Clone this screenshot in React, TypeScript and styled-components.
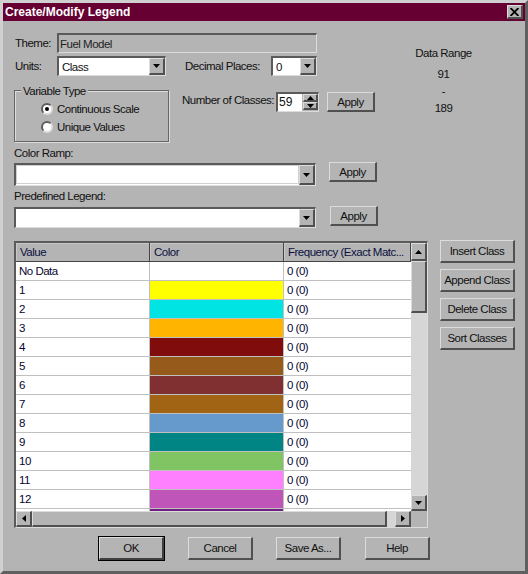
import React from 'react';
import styled, { createGlobalStyle } from 'styled-components';

const Global = createGlobalStyle`
  html, body { margin: 0; padding: 0; background: #b4b4b4; }
  * { box-sizing: border-box; }
`;

const raised = `
  background: #b4b4b4;
  border-style: solid;
  border-width: 1px 2px 2px 1px;
  border-color: #dcdcdc #505050 #505050 #dcdcdc;
`;
const sunken = `
  border-style: solid;
  border-width: 2px 1px 1px 2px;
  border-color: #5a5a5a #dcdcdc #dcdcdc #5a5a5a;
`;

const Dialog = styled.div`
  width: 528px; height: 574px; overflow: hidden;
  display: flex; flex-direction: column;
  background: #b4b4b4;
  border-style: solid; border-width: 3px;
  border-color: #d0d0d0 #606060 #606060 #d0d0d0;
  font: 11.5px/14px "Liberation Sans", Arial, sans-serif;
  letter-spacing: -0.5px;
  color: #111;
`;
const TitleBar = styled.div`
  height: 18px; background: #660033; color: #fff;
  display: flex; align-items: center; justify-content: space-between;
  padding: 0 2px 0 2px;
  font: bold 12px/18px "Liberation Sans", Arial, sans-serif;
  letter-spacing: 0;
`;
const CloseButton = styled.div`
  ${raised}
  width: 16px; height: 14px;
  display: flex; align-items: center; justify-content: center;
`;
const Body = styled.div`
  flex: 1; display: flex; flex-direction: column;
  padding: 12px 0 0 11px;
`;
const Top = styled.div`display: flex;`;
const TopLeft = styled.div`width: 392px; display: flex; flex-direction: column;`;
const Row = styled.div<{ $top?: number }>`
  display: flex; align-items: center;
  margin-top: ${p => p.$top ?? 0}px;
  height: 20px;
`;
const Label = styled.span<{ $w?: number; $left?: number }>`
  display: block; white-space: nowrap; flex: none;
  width: ${p => (p.$w ? p.$w + 'px' : 'auto')};
  margin-left: ${p => p.$left ?? 0}px;
`;
const ThemeField = styled.div`
  ${sunken}
  width: 260px; height: 20px; padding-left: 1px;
  line-height: 18px; color: #222;
`;
const ComboBox = styled.div<{ $w: number }>`
  ${sunken}
  width: ${p => p.$w}px; height: 20px; flex: none;
  background: #fff; display: flex; justify-content: space-between;
  padding-left: 3px; line-height: 18px;
`;
const ComboArrow = styled.div`
  ${raised}
  width: 16px; flex: none;
  display: flex; align-items: center; justify-content: center;
`;
const ArrowDown = () => (
  <svg width="7" height="4" viewBox="0 0 7 4"><path d="M0 0h7L3.5 4z" fill="#000" /></svg>
);
const ArrowUp = () => (
  <svg width="7" height="4" viewBox="0 0 7 4"><path d="M0 4h7L3.5 0z" fill="#000" /></svg>
);
const ArrowLeft = () => (
  <svg width="4" height="7" viewBox="0 0 4 7"><path d="M4 0v7L0 3.5z" fill="#000" /></svg>
);
const ArrowRight = () => (
  <svg width="4" height="7" viewBox="0 0 4 7"><path d="M0 0v7l4-3.5z" fill="#000" /></svg>
);
const MidRow = styled.div`display: flex; margin-top: 14px; height: 52px;`;
const Group = styled.div`
  width: 155px; height: 52px; padding: 9px 0 0 26px;
  border: 1px solid #666;
  box-shadow: inset 1px 1px 0 #dcdcdc, 1px 1px 0 #dcdcdc;
  position: relative;
`;
const GroupTitle = styled.span`
  position: absolute; left: 6px; top: -7px; padding: 0 2px; background: #b4b4b4;
`;
const RadioRow = styled.div`
  display: flex; align-items: center; height: 18px; gap: 4px;
`;
const RadioDot = styled.span<{ $on?: boolean }>`
  width: 12px; height: 12px; border-radius: 50%; background: #fff; flex: none;
  border: 2px solid #5e5e5e; border-right-color: #ddd; border-bottom-color: #ddd;
  display: flex; align-items: center; justify-content: center;
  &::after { content: ""; width: 4px; height: 4px; border-radius: 50%; background: ${p => (p.$on ? '#000' : 'transparent')}; }
`;
const ClassRow = styled.div`display: flex; align-items: flex-start; margin-left: 13px; margin-top: 2px;`;
const ClassLabel = styled.span`margin-top: 1px; line-height: 14px; white-space: nowrap; width: 94px;`;
const Spin = styled.div`
  ${sunken}
  width: 43px; height: 20px; background: #fff; display: flex; justify-content: space-between;
  padding-left: 1px; line-height: 17px; font-size: 12px; letter-spacing: 0;
`;
const SpinButtons = styled.div`
  display: flex; flex-direction: column; width: 16px; background: #b4b4b4;
  padding: 0 0 1px 1px;
`;
const SpinBtn = styled.div`
  ${raised}
  flex: 1; display: flex; align-items: center; justify-content: center;
`;
const Button = styled.div<{ $w: number; $h?: number; $left?: number; $default?: boolean }>`
  ${raised}
  width: ${p => p.$w}px; height: ${p => p.$h ?? 20}px; flex: none;
  margin-left: ${p => p.$left ?? 0}px;
  display: flex; align-items: center; justify-content: center; white-space: nowrap;
  ${p => p.$default ? 'outline: 1px solid #000; outline-offset: 0; border-color: #dcdcdc #404040 #404040 #dcdcdc;' : ''}
`;
const RampLabel = styled.div<{ $top: number }>`height: 14px; margin-top: ${p => p.$top}px;`;
const RampRow = styled.div<{ $top: number; $h: number }>`
  display: flex; align-items: flex-start; margin-top: ${p => p.$top}px; height: ${p => p.$h}px;
`;
const LongCombo = styled.div<{ $h: number; $top: number }>`
  ${sunken}
  width: 302px; height: ${p => p.$h}px; margin-top: ${p => p.$top}px;
  background: #fff; display: flex; justify-content: flex-end; flex: none;
`;
const RampField = styled.div`
  flex: 1; background: #fff; border: 1px solid #cfcfcf; margin-bottom: 1px;
`;
const DataRange = styled.div`
  flex: 1; display: flex; flex-direction: column; align-items: center;
  margin-top: 13px; padding-right: 44px;
`;
const RangeLine = styled.div<{ $top: number }>`margin-top: ${p => p.$top}px; height: 14px;`;

const Lower = styled.div`display: flex; margin-top: 12px;`;
const TableFrame = styled.div`
  ${sunken}
  width: 414px; height: 287px; display: grid; margin-top: 1px; flex: none;
  grid-template-columns: 395px 16px; grid-template-rows: 268px 16px;
  background: #b4b4b4; overflow: hidden;
`;
const Grid = styled.div`overflow: hidden; background: #fff; color: #000;`;
const GridRow = styled.div`
  display: grid; grid-template-columns: 134px 134px 127px;
  height: 19px; line-height: 18px; border-bottom: 1px solid #c0c0c0;
`;
const HeadRow = styled(GridRow)`
  background: #b4b4b4; border-bottom: 1px solid #444; color: #0b1040;
`;
const HeadCell = styled.div`
  padding-left: 4px; border-right: 1px solid #444; white-space: nowrap; overflow: hidden;
  box-shadow: inset 1px 1px 0 #c8c8c8;
`;
const ValueCell = styled.div`padding-left: 3px; border-right: 1px solid #c0c0c0; color: #050530;`;
const ColorCell = styled.div<{ $c: string }>`background: ${p => p.$c}; border-right: 1px solid #c0c0c0;`;
const FreqCell = styled.div`padding-left: 3px; color: #050530;`;
const VScroll = styled.div`display: flex; flex-direction: column; background: #d6d6d6;`;
const ScrollBtn = styled.div<{ $h?: number }>`
  ${raised}
  width: 16px; height: ${p => p.$h ?? 16}px; flex: none;
  display: flex; align-items: center; justify-content: center;
`;
const VThumb = styled.div`${raised} height: 52px; width: 16px; flex: none;`;
const Track = styled.div`flex: 1;`;
const HScroll = styled.div`display: flex; background: #d6d6d6;`;
const HThumb = styled.div`${raised} width: 355px; flex: none; height: 16px;`;
const Corner = styled.div`background: #b4b4b4;`;
const SideButtons = styled.div`display: flex; flex-direction: column; gap: 6px; margin-left: 12px;`;
const Footer = styled.div`display: flex; margin: 9px 0 0 85px;`;

const rows: [string, string][] = [
  ['1', '#ffff00'], ['2', '#00e4e4'], ['3', '#ffb400'], ['4', '#800c0c'],
  ['5', '#965a1a'], ['6', '#803030'], ['7', '#a06414'], ['8', '#6699cc'],
  ['9', '#008484'], ['10', '#80c464'], ['11', '#ff80ff'], ['12', '#bf55b8'], ['', '#6f1f7f'],
];

export default function App() {
  return (
    <>
      <Global />
      <Dialog>
        <TitleBar>
          <span>Create/Modify Legend</span>
          <CloseButton>
            <svg width="9" height="8" viewBox="0 0 9 8"><path d="M0.5 0l8 8M8.5 0l-8 8" stroke="#000" strokeWidth="1.8" /></svg>
          </CloseButton>
        </TitleBar>
        <Body>
          <Top>
            <TopLeft>
              <Row><Label $w={42} $left={1}>Theme:</Label><ThemeField>Fuel Model</ThemeField></Row>
              <Row $top={3}>
                <Label $w={42} $left={1}>Units:</Label>
                <ComboBox $w={109}>Class<ComboArrow><ArrowDown /></ComboArrow></ComboBox>
                <Label $left={19} $w={86}>Decimal Places:</Label>
                <ComboBox $w={46}>0<ComboArrow><ArrowDown /></ComboArrow></ComboBox>
              </Row>
              <MidRow>
                <Group>
                  <GroupTitle>Variable Type</GroupTitle>
                  <RadioRow><RadioDot $on />Continuous Scale</RadioRow>
                  <RadioRow><RadioDot />Unique Values</RadioRow>
                </Group>
                <ClassRow>
                  <ClassLabel>Number of Classes:</ClassLabel>
                  <Spin>59<SpinButtons><SpinBtn><ArrowUp /></SpinBtn><SpinBtn><ArrowDown /></SpinBtn></SpinButtons></Spin>
                  <Button $w={48} $left={8}>Apply</Button>
                </ClassRow>
              </MidRow>
            </TopLeft>
            <DataRange>
              <RangeLine $top={0}>Data Range</RangeLine>
              <RangeLine $top={7}>91</RangeLine>
              <RangeLine $top={3}>-</RangeLine>
              <RangeLine $top={3}>189</RangeLine>
            </DataRange>
          </Top>
          <RampLabel $top={4}>Color Ramp:</RampLabel>
          <RampRow $top={2} $h={24}>
            <LongCombo $h={23} $top={1}><RampField /><ComboArrow><ArrowDown /></ComboArrow></LongCombo>
            <Button $w={48} $left={13}>Apply</Button>
          </RampRow>
          <RampLabel $top={3}>Predefined Legend:</RampLabel>
          <RampRow $top={3} $h={22}>
            <LongCombo $h={21} $top={1}><ComboArrow><ArrowDown /></ComboArrow></LongCombo>
            <Button $w={48} $left={14}>Apply</Button>
          </RampRow>
          <Lower>
            <TableFrame>
              <Grid>
                <HeadRow>
                  <HeadCell>Value</HeadCell><HeadCell>Color</HeadCell><HeadCell>Frequency (Exact Matc...</HeadCell>
                </HeadRow>
                <GridRow><ValueCell>No Data</ValueCell><ColorCell $c="#fff" /><FreqCell>0 (0)</FreqCell></GridRow>
                {rows.map(([v, c], i) => (
                  <GridRow key={i}>
                    <ValueCell>{v}</ValueCell><ColorCell $c={c} /><FreqCell>{v ? '0 (0)' : ''}</FreqCell>
                  </GridRow>
                ))}
              </Grid>
              <VScroll>
                <ScrollBtn $h={18}><ArrowUp /></ScrollBtn>
                <VThumb />
                <Track />
                <ScrollBtn><ArrowDown /></ScrollBtn>
              </VScroll>
              <HScroll>
                <ScrollBtn><ArrowLeft /></ScrollBtn>
                <HThumb />
                <Track />
                <ScrollBtn><ArrowRight /></ScrollBtn>
              </HScroll>
              <Corner />
            </TableFrame>
            <SideButtons>
              <Button $w={75} $h={23}>Insert Class</Button>
              <Button $w={75} $h={23}>Append Class</Button>
              <Button $w={75} $h={23}>Delete Class</Button>
              <Button $w={75} $h={23}>Sort Classes</Button>
            </SideButtons>
          </Lower>
          <Footer>
            <Button $w={65} $h={23} $default>OK</Button>
            <Button $w={65} $h={23} $left={24}>Cancel</Button>
            <Button $w={65} $h={23} $left={23}>Save As...</Button>
            <Button $w={65} $h={23} $left={24}>Help</Button>
          </Footer>
        </Body>
      </Dialog>
    </>
  );
}
